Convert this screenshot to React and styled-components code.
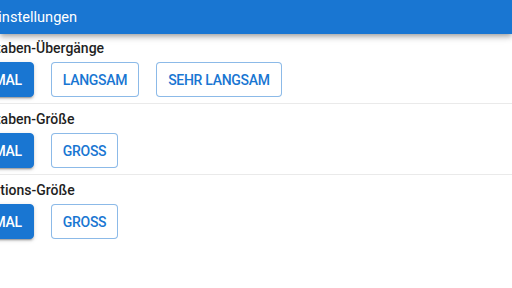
import { createGlobalStyle, styled, css } from 'styled-components';

const GlobalStyle = createGlobalStyle`
    html, body {
        margin: 0;
        padding: 0;
        background: #FFFFFF;
        overflow: hidden;
    }
    body {
        font-family: Roboto, "Liberation Sans", sans-serif;
        width: 512px;
        height: 288px;
    }
`;

const Page = styled.div`
    width: 512px;
    height: 288px;
    overflow: hidden;
`;

const AppBar = styled.header`
    height: 34px;
    background-color: #1976D2;
    color: #FFFFFF;
    display: flex;
    align-items: center;
    box-shadow: 0 2px 4px -1px rgba(0,0,0,0.2), 0 4px 5px 0 rgba(0,0,0,0.14), 0 1px 10px 0 rgba(0,0,0,0.12);
    position: relative;
    z-index: 1;
`;

const Title = styled.h1`
    margin: 0 0 0 -10px;
    font-size: 14.6px;
    font-weight: 400;
    line-height: 20px;
`;

const Content = styled.main`
    margin-left: -46px;
`;

const Section = styled.section`
    padding: 5px 0 6px;
    border-bottom: ${p => (p.$last ? 'none' : '1px solid #EAEAEA')};

    &:first-child {
        padding-top: 4px;
    }
`;

const Label = styled.div`
    font-size: 14px;
    font-weight: 500;
    line-height: 20px;
    color: #1F1F1F;
    padding-left: 3px;
    margin-bottom: 4px;
`;

const ButtonRow = styled.div`
    display: flex;
    gap: 17px;
`;

const Button = styled.button`
    height: 35px;
    padding: 0 11px;
    border-radius: 4px;
    font-family: Roboto, "Liberation Sans", sans-serif;
    font-size: 14px;
    font-weight: 500;
    letter-spacing: -0.3px;
    text-transform: uppercase;
    cursor: pointer;
    ${p => p.$active ? css`
        background-color: #1976D2;
        color: #FFFFFF;
        border: 1px solid #1976D2;
        box-shadow: 0 3px 1px -2px rgba(0,0,0,0.2), 0 2px 2px 0 rgba(0,0,0,0.14), 0 1px 5px 0 rgba(0,0,0,0.12);
    ` : css`
        background-color: #FFFFFF;
        color: #1976D2;
        border: 1px solid rgba(25, 118, 210, 0.5);
    `}
`;

const settings = [
    { label: 'Buchstaben-Übergänge', options: ['Normal', 'Langsam', 'Sehr langsam'] },
    { label: 'Buchstaben-Größe', options: ['Normal', 'Gross'] },
    { label: 'Navigations-Größe', options: ['Normal', 'Gross'] },
];

export default function App() {
    return (
        <Page>
            <GlobalStyle />
            <AppBar>
                <Title>Einstellungen</Title>
            </AppBar>
            <Content>
                {settings.map((s, i) => (
                    <Section key={s.label} $last={i === settings.length - 1}>
                        <Label>{s.label}</Label>
                        <ButtonRow>
                            {s.options.map((o, j) => (
                                <Button key={o} $active={j === 0}>{o}</Button>
                            ))}
                        </ButtonRow>
                    </Section>
                ))}
            </Content>
        </Page>
    );
}
